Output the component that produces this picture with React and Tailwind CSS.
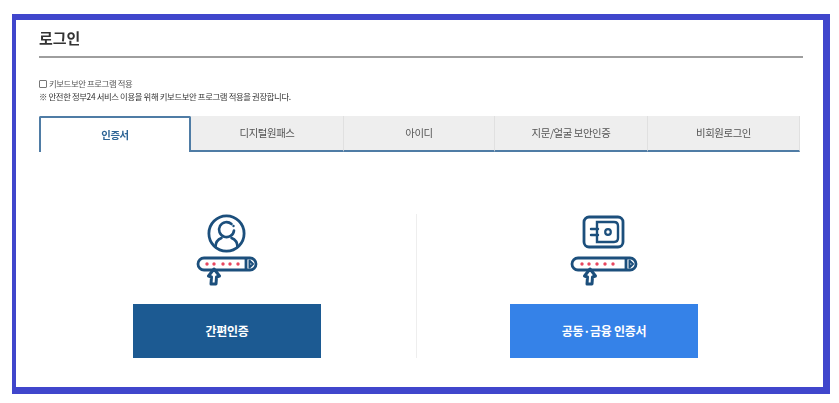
const Bar = ({ width, split, dots }) => (
  <g>
    <rect x="3" y="44" width={width} height="12" rx="6" fill="#fff" stroke="#1c4f7c" strokeWidth="2.8" />
    <line x1={split} y1="44" x2={split} y2="56" stroke="#1c4f7c" strokeWidth="2.8" />
    <path d={`M${split + 3.5} 46.5 L${split + 7} 50 L${split + 3.5} 53.5 Z`} fill="#fff" stroke="#1c4f7c" strokeWidth="2" strokeLinejoin="round" />
    {dots.map((x) => (
      <circle key={x} cx={x} cy="50" r="1.7" fill="#e8475f" />
    ))}
  </g>
);

const Cursor = ({ x }) => (
  <path
    d={`M${x} 55 L${x + 5.5} 62 L${x + 2.5} 63 L${x + 2} 70 L${x - 3} 70 L${x - 2.5} 63 L${x - 5.5} 62 Z`}
    fill="#fff"
    stroke="#1c4f7c"
    strokeWidth="3"
    strokeLinejoin="round"
  />
);

const PersonIcon = () => (
  <svg width="64" height="72" viewBox="0 0 64 72" fill="none">
    <circle cx="31.5" cy="19.5" r="17.6" stroke="#1c4f7c" strokeWidth="2.8" />
    <path d="M36.5 10 A7.5 7.5 0 1 0 39 16.5" stroke="#1c4f7c" strokeWidth="2.6" strokeLinecap="round" />
    <circle cx="38.5" cy="12" r="1.2" fill="#1c4f7c" />
    <path d="M20.5 33 C20.5 28 22.5 25.5 26.5 24 M42.5 33 C42.5 28 40.5 25.5 36.5 24" stroke="#1c4f7c" strokeWidth="2.6" strokeLinecap="round" />
    <Bar width={58} split={51} dots={[12, 19, 28, 35, 43]} />
    <Cursor x={19} />
  </svg>
);

const SafeIcon = () => (
  <svg width="70" height="72" viewBox="0 0 70 72" fill="none">
    <rect x="15" y="3" width="39" height="30" rx="5" stroke="#1c4f7c" strokeWidth="2.8" />
    <path d="M28 8 H45 Q49 8 49 12 V24 Q49 28 45 28 H28 Z" stroke="#1c4f7c" strokeWidth="2.4" />
    <path d="M22 15 H29 M22 21 H29" stroke="#1c4f7c" strokeWidth="2.4" strokeLinecap="round" />
    <circle cx="39" cy="18" r="2.8" stroke="#1c4f7c" strokeWidth="2.2" />
    <Bar width={64} split={57} dots={[13, 20, 28, 36, 44]} />
    <Cursor x={21} />
  </svg>
);

const tabs = [
  ["디지털원패스", "w-[153px]"],
  ["아이디", "w-[151px]"],
  ["지문/얼굴 보안인증", "w-[153px]"],
  ["비회원로그인", "w-[152px]"],
];

export default function App() {
  return (
    <div className="h-[403px] w-[839px] bg-white pt-[14px] pl-[12px] font-['Noto_Sans_CJK_KR','Noto_Sans',sans-serif]">
      <div className="h-[380px] w-[818px] border-t-[6px] border-r-[7px] border-b-[7px] border-l-[4px] border-[#4046cc] pl-[23px]">
        <div className="blur-[0.7px]">
          <div className="w-[764px] border-b-[2px] border-[#9e9e9e] pt-[6px] pb-[6px]">
            <h1 className="text-[15px] leading-[24px] font-bold text-[#333]">로그인</h1>
          </div>

          <label className="mt-[20px] flex h-[11px] items-center gap-[2px] text-[8.4px] leading-[11px] tracking-[-0.4px] text-[#555]">
            <span className="h-[8px] w-[8px] rounded-[1px] border border-[#777] bg-white" />
            키보드보안 프로그램 적용
          </label>
          <p className="mt-[2px] text-[8.4px] leading-[11px] tracking-[-0.38px] text-[#333]">
            ※ 안전한 정부24 서비스 이용을 위해 키보드보안 프로그램 적용을 권장합니다.
          </p>

          <div className="mt-[14px] flex h-[36px] w-[761px]">
            <div className="flex w-[152px] items-center justify-center rounded-t-[2px] border-x-[2px] border-t-[2px] border-[#4f7ca5] bg-white text-[10.4px] font-bold tracking-[-0.4px] text-[#2f6596]">
              인증서
            </div>
            {tabs.map(([label, width]) => (
              <div
                key={label}
                className={`flex items-center justify-center border-r border-b-[2px] border-r-[#e0e0e0] border-b-[#4f7ca5] bg-[#eeeeee] text-[10.4px] tracking-[-0.4px] text-[#555] ${width}`}
              >
                {label}
              </div>
            ))}
          </div>

          <div className="mt-[62px] flex w-[752px]">
            <div className="mr-[1px] flex w-[376px] flex-col items-center">
              <PersonIcon />
              <button className="mt-[18px] h-[54px] w-[188px] bg-[#1c5a92] text-[12px] font-bold tracking-[-0.3px] text-white">
                간편인증
              </button>
            </div>
            <div className="flex w-[375px] flex-col items-center border-l border-[#eeeeee]">
              <SafeIcon />
              <button className="mt-[18px] h-[54px] w-[188px] bg-[#3582e8] text-[12px] font-bold tracking-[-0.3px] text-white">
                공동·금융 인증서
              </button>
            </div>
          </div>
        </div>
      </div>
    </div>
  );
}
